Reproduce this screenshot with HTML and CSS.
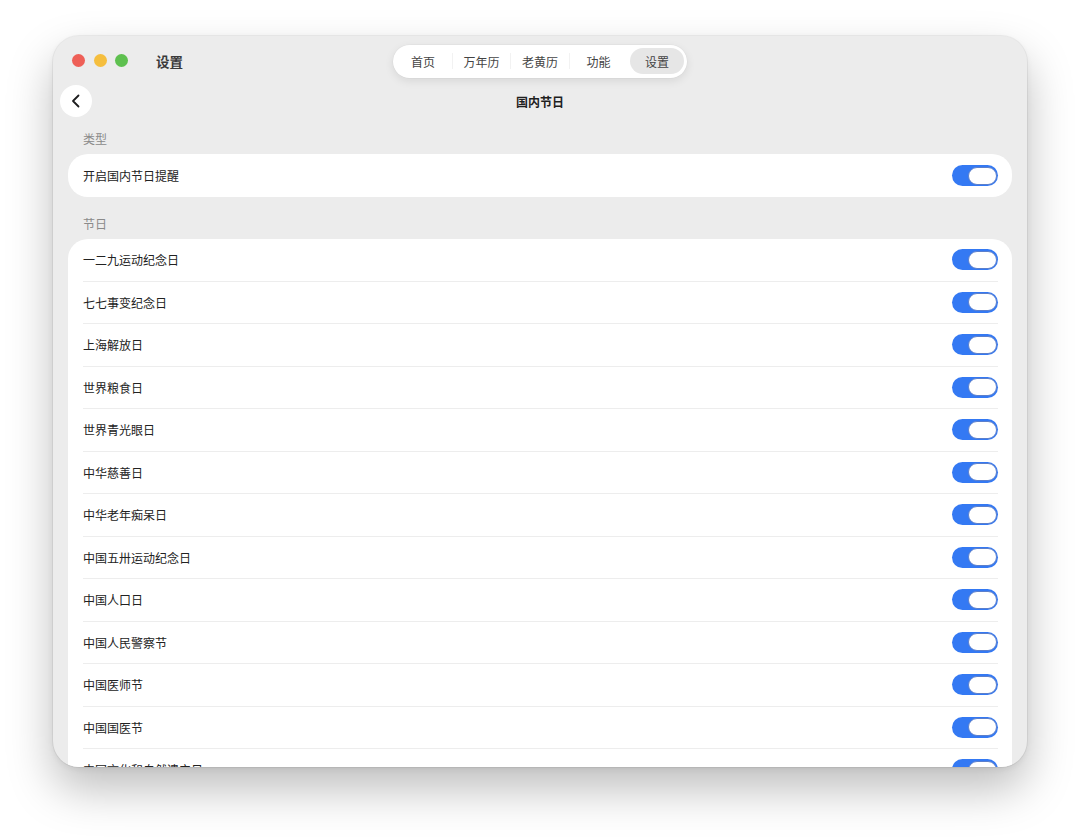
FILE: index.html
```html
<!DOCTYPE html>
<html lang="zh-CN">
<head>
<meta charset="utf-8">
<title>设置</title>
<link rel="stylesheet" href="styles.css">
</head>
<body>
<div class="window">
  <header class="titlebar">
    <div class="tb-left">
      <div class="lights">
        <span class="light red"></span>
        <span class="light yellow"></span>
        <span class="light green"></span>
      </div>
      <span class="app-title">设置</span>
    </div>
    <nav class="tabs">
      <span class="tab">首页</span>
      <span class="sep"></span>
      <span class="tab">万年历</span>
      <span class="sep"></span>
      <span class="tab">老黄历</span>
      <span class="sep"></span>
      <span class="tab">功能</span>
      <span class="sep hidden"></span>
      <span class="tab active">设置</span>
    </nav>
    <div></div>
  </header>

  <div class="navrow">
    <div class="nav-left">
      <button class="back" aria-label="返回">
        <svg width="14" height="14" viewBox="0 0 14 14"><polyline points="9.5,1.5 4,7 9.5,12.5" fill="none" stroke="#1d1d1f" stroke-width="1.8" stroke-linecap="round" stroke-linejoin="round"/></svg>
      </button>
    </div>
    <div class="page-title">国内节日</div>
    <div></div>
  </div>

  <main class="content">
    <div class="section-label">类型</div>
    <div class="card">
      <div class="row single"><span>开启国内节日提醒</span><span class="toggle"><span class="knob"></span></span></div>
    </div>

    <div class="section-label second">节日</div>
    <div class="card">
      <div class="row"><span>一二九运动纪念日</span><span class="toggle"><span class="knob"></span></span></div>
      <div class="row"><span>七七事变纪念日</span><span class="toggle"><span class="knob"></span></span></div>
      <div class="row"><span>上海解放日</span><span class="toggle"><span class="knob"></span></span></div>
      <div class="row"><span>世界粮食日</span><span class="toggle"><span class="knob"></span></span></div>
      <div class="row"><span>世界青光眼日</span><span class="toggle"><span class="knob"></span></span></div>
      <div class="row"><span>中华慈善日</span><span class="toggle"><span class="knob"></span></span></div>
      <div class="row"><span>中华老年痴呆日</span><span class="toggle"><span class="knob"></span></span></div>
      <div class="row"><span>中国五卅运动纪念日</span><span class="toggle"><span class="knob"></span></span></div>
      <div class="row"><span>中国人口日</span><span class="toggle"><span class="knob"></span></span></div>
      <div class="row"><span>中国人民警察节</span><span class="toggle"><span class="knob"></span></span></div>
      <div class="row"><span>中国医师节</span><span class="toggle"><span class="knob"></span></span></div>
      <div class="row"><span>中国国医节</span><span class="toggle"><span class="knob"></span></span></div>
      <div class="row"><span>中国文化和自然遗产日</span><span class="toggle"><span class="knob"></span></span></div>
    </div>
  </main>
</div>
</body>
</html>
```

FILE: styles.css
```css
* { box-sizing: border-box; }

html, body {
  margin: 0;
  padding: 0;
  background: #ffffff;
}

body {
  font-family: "Noto Sans CJK SC", "Noto Sans", sans-serif;
  color: #1f1f1f;
  width: 1080px;
  height: 837px;
  overflow: hidden;
}

.window {
  margin: 36px 0 0 53px;
  width: 974px;
  height: 731px;
  border-radius: 26px;
  background: #ececec;
  overflow: hidden;
  display: flex;
  flex-direction: column;
  box-shadow: 0 22px 46px rgba(0, 0, 0, 0.26), 0 2px 6px rgba(0, 0, 0, 0.06), 0 0 0 1px rgba(0, 0, 0, 0.05);
}

.titlebar {
  height: 49px;
  flex: none;
  display: grid;
  grid-template-columns: 1fr auto 1fr;
  align-items: center;
}

.tb-left {
  display: flex;
  align-items: center;
  padding-left: 19px;
}

.lights {
  display: flex;
  gap: 8.5px;
}

.light {
  width: 13px;
  height: 13px;
  border-radius: 50%;
}
.red { background: #ee5f57; }
.yellow { background: #f5be3e; }
.green { background: #5ec04f; }

.app-title {
  margin-left: 28px;
  font-size: 13.5px;
  font-weight: 700;
  color: #3a3a3a;
}

.tabs {
  display: flex;
  align-items: center;
  gap: 1.75px;
  padding: 3px;
  height: 33px;
  margin-top: 1px;
  background: #ffffff;
  border-radius: 17px;
  box-shadow: 0 3px 10px rgba(0, 0, 0, 0.09), 0 0 0 0.5px rgba(0, 0, 0, 0.04);
}

.tab {
  width: 54px;
  height: 26px;
  display: flex;
  align-items: center;
  justify-content: center;
  font-size: 12px;
  color: #444;
  border-radius: 13px;
}

.tab.active {
  background: #e6e6e6;
}

.sep {
  width: 1px;
  height: 16px;
  background: #f2f2f2;
}
.sep.hidden { background: transparent; }

.navrow {
  flex: none;
  height: 32px;
  display: grid;
  grid-template-columns: 1fr auto 1fr;
  align-items: center;
}

.nav-left {
  padding-left: 7px;
  display: flex;
}

.back {
  width: 32px;
  height: 32px;
  border: none;
  border-radius: 50%;
  background: #ffffff;
  display: flex;
  align-items: center;
  justify-content: center;
  padding: 0;
}

.page-title {
  font-size: 12px;
  font-weight: 700;
  color: #1f1f1f;
}

.content {
  padding: 14px 15px 0;
  display: flex;
  flex-direction: column;
}

.section-label {
  font-size: 12px;
  line-height: 16px;
  color: #8a8a8a;
  padding-left: 15px;
  margin-bottom: 7px;
}
.section-label.second { margin-top: 19px; }

.card {
  background: #ffffff;
  border-radius: 20px;
  padding: 0 14px 0 15px;
  flex: none;
}

.row {
  height: 42.5px;
  display: flex;
  align-items: center;
  justify-content: space-between;
  font-size: 12px;
  color: #222;
  border-bottom: 1px solid #ededed;
}

.row.single {
  height: 43px;
  border-bottom: none;
}

.toggle {
  position: relative;
  width: 46px;
  height: 21px;
  border-radius: 11px;
  background: #3479f3;
  flex: none;
}

.knob {
  position: absolute;
  right: 1.5px;
  top: 1.5px;
  width: 29px;
  height: 18px;
  border-radius: 9px;
  background: #ffffff;
  border: 1px solid #5b7fcc;
}
```
